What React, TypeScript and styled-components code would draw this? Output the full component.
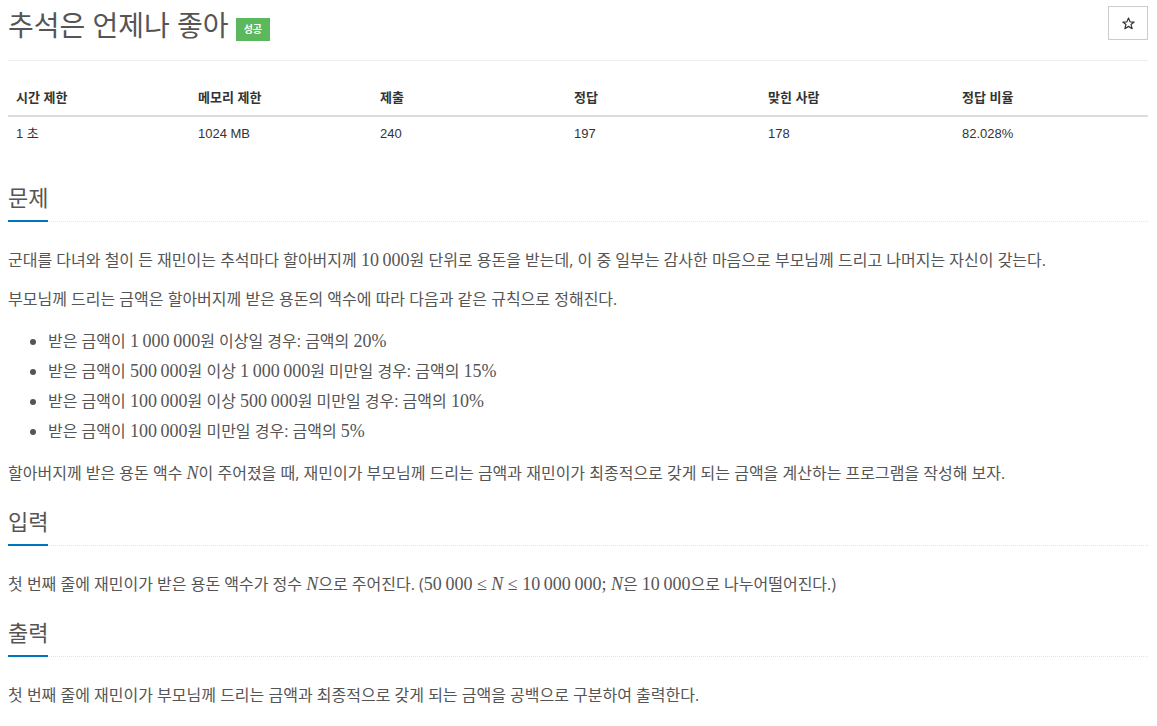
import React from "react";
import styled, { createGlobalStyle } from "styled-components";

const Global = createGlobalStyle`
  html, body { margin: 0; padding: 0; background: #fff; }
  body {
    font-family: "Open Sans", "Noto Sans CJK KR", sans-serif;
    color: #555;
  }
`;

const Page = styled.div`
  padding: 0 9px 0 8px;
`;

const TitleBar = styled.div`
  display: flex;
  align-items: flex-start;
  justify-content: space-between;
  height: 54px;
  padding-top: 6px;
  border-bottom: 1px solid #eee;
`;

const TitleGroup = styled.div`
  display: flex;
  align-items: flex-start;
  gap: 7px;
  padding-top: 1px;
`;

const Title = styled.h1`
  margin: 0;
  font-size: 28px;
  font-weight: 400;
  line-height: 36px;
  color: #555;
`;

const Badge = styled.span`
  display: inline-block;
  background: #5cb85c;
  color: #fff;
  font-size: 10px;
  font-weight: 700;
  line-height: 23px;
  padding: 0 8px;
  margin-top: 11px;
`;

const StarButton = styled.button`
  width: 40px;
  height: 34px;
  border: 1px solid #ccc;
  background: #fff;
  display: flex;
  align-items: center;
  justify-content: center;
  padding: 0;
`;

const Table = styled.table`
  width: 100%;
  border-collapse: collapse;
  margin-top: 20px;
  margin-bottom: 31px;
  font-family: "Liberation Sans", "Noto Sans CJK KR", sans-serif;
  font-size: 13px;
  color: #333;
  table-layout: fixed;
`;

const Th = styled.th<{ $w: number }>`
  width: ${(p) => p.$w - 16}px;
  text-align: left;
  font-weight: 700;
  padding: 8px;
  line-height: 18px;
  border-bottom: 2px solid #ddd;
`;

const Td = styled.td`
  padding: 8px;
  line-height: 18px;
`;

const Section = styled.section`
  margin-top: 21px;
`;

const Headline = styled.div`
  border-bottom: 1px dotted #e4e4e4;
`;

const H2 = styled.h2`
  display: inline-block;
  margin: 0 0 -1px;
  font-size: 22px;
  font-weight: 400;
  line-height: 30px;
  color: #555;
  padding-bottom: 8px;
  border-bottom: 2px solid #0076c0;
  vertical-align: top;
`;

const Body = styled.div`
  font-size: 16px;
  line-height: 24px;
  color: #555;
  padding-top: 26px;
`;

const P = styled.p`
  margin: 0 0 15px;
`;

const List = styled.ul`
  margin: 0 0 15px;
  padding-left: 40px;
  li { line-height: 24px; padding: 3px 0; }
`;

const M = styled.span`
  font-family: "Liberation Serif", "DejaVu Serif", serif;
  font-size: 18px;
  line-height: 1;
  color: #555;
`;

const MI = styled(M)`
  font-style: italic;
`;

const T = "\u2009";

const cols = [182, 182, 194, 194, 194, 194];
const heads = ["시간 제한", "메모리 제한", "제출", "정답", "맞힌 사람", "정답 비율"];
const vals = ["1 초", "1024 MB", "240", "197", "178", "82.028%"];

export default function App() {
  return (
    <>
      <Global />
      <Page>
        <TitleBar>
          <TitleGroup>
            <Title>추석은 언제나 좋아</Title>
            <Badge>성공</Badge>
          </TitleGroup>
          <StarButton aria-label="즐겨찾기">
            <svg width="13" height="13" viewBox="0 0 24 24" fill="none" stroke="#333" strokeWidth="2.2" strokeLinejoin="round">
              <polygon points="12,2 15,9 22.5,9.3 16.7,14 18.7,21.5 12,17.3 5.3,21.5 7.3,14 1.5,9.3 9,9" />
            </svg>
          </StarButton>
        </TitleBar>
        <Table>
          <thead>
            <tr>
              {heads.map((h, i) => (
                <Th key={h} $w={cols[i]}>{h}</Th>
              ))}
            </tr>
          </thead>
          <tbody>
            <tr>
              {vals.map((v) => (
                <Td key={v}>{v}</Td>
              ))}
            </tr>
          </tbody>
        </Table>

        <Section>
          <Headline><H2>문제</H2></Headline>
          <Body>
            <P>군대를 다녀와 철이 든 재민이는 추석마다 할아버지께 <M>10{T}000</M>원 단위로 용돈을 받는데, 이 중 일부는 감사한 마음으로 부모님께 드리고 나머지는 자신이 갖는다.</P>
            <P>부모님께 드리는 금액은 할아버지께 받은 용돈의 액수에 따라 다음과 같은 규칙으로 정해진다.</P>
            <List>
              <li>받은 금액이 <M>1{T}000{T}000</M>원 이상일 경우: 금액의 <M>20%</M></li>
              <li>받은 금액이 <M>500{T}000</M>원 이상 <M>1{T}000{T}000</M>원 미만일 경우: 금액의 <M>15%</M></li>
              <li>받은 금액이 <M>100{T}000</M>원 이상 <M>500{T}000</M>원 미만일 경우: 금액의 <M>10%</M></li>
              <li>받은 금액이 <M>100{T}000</M>원 미만일 경우: 금액의 <M>5%</M></li>
            </List>
            <P>할아버지께 받은 용돈 액수 <MI>N</MI>이 주어졌을 때, 재민이가 부모님께 드리는 금액과 재민이가 최종적으로 갖게 되는 금액을 계산하는 프로그램을 작성해 보자.</P>
          </Body>
        </Section>

        <Section>
          <Headline><H2>입력</H2></Headline>
          <Body>
            <P>첫 번째 줄에 재민이가 받은 용돈 액수가 정수 <MI>N</MI>으로 주어진다. (<M>50{T}000 ≤ </M><MI>N</MI><M> ≤ 10{T}000{T}000; </M><MI>N</MI>은 <M>10{T}000</M>으로 나누어떨어진다.)</P>
          </Body>
        </Section>

        <Section>
          <Headline><H2>출력</H2></Headline>
          <Body>
            <P>첫 번째 줄에 재민이가 부모님께 드리는 금액과 최종적으로 갖게 되는 금액을 공백으로 구분하여 출력한다.</P>
          </Body>
        </Section>
      </Page>
    </>
  );
}
